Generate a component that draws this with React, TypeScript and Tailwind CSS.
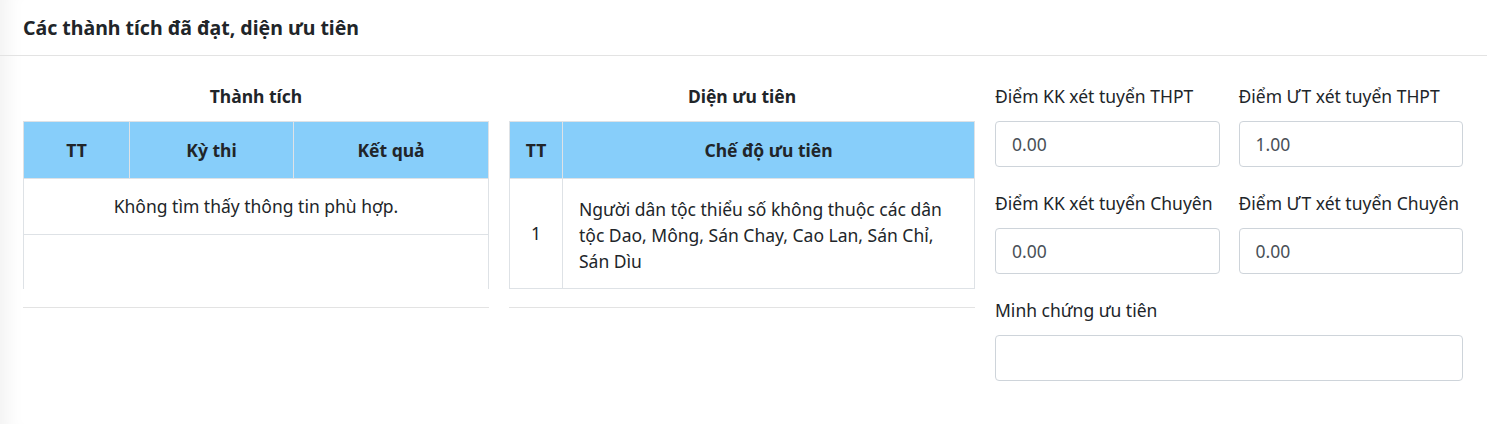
import React from "react";

const font = { fontFamily: "'Noto Sans', 'Open Sans', sans-serif" };

const Field = ({ label, value }: { label: string; value: string }) => (
  <div className="mb-6">
    <label className="block h-6 leading-6 mb-[13px] text-[17.5px] text-[#212529] whitespace-nowrap">{label}</label>
    <div className="h-[46px] rounded border border-[#ced4da] bg-white px-4 pt-px flex items-center text-[17.5px] text-[#495057]">
      {value}
    </div>
  </div>
);

export default function App() {
  return (
    <div style={font} className="w-[1487px] h-[424px] bg-white text-[#212529] shadow-[inset_22px_0_18px_-14px_rgba(0,0,0,0.05)]">
      <div className="h-[56px] border-b border-[#e3e3e3] px-[23px] flex items-center">
        <h2 className="text-[19.5px] font-bold text-[#212529]">Các thành tích đã đạt, diện ưu tiên</h2>
      </div>

      <div className="px-[23px] pt-[28px] flex gap-5 text-[17.5px]">
        {/* Thành tích */}
        <div className="w-[466px]">
          <div className="h-6 leading-6 mb-[13px] text-center font-bold">Thành tích</div>
          <table className="w-full border-collapse">
            <thead>
              <tr className="bg-[#87cefa] h-[57px]">
                <th className="w-[106px] border border-[#dee2e6] font-bold">TT</th>
                <th className="w-[164px] border border-[#dee2e6] font-bold">Kỳ thi</th>
                <th className="border border-[#dee2e6] font-bold">Kết quả</th>
              </tr>
            </thead>
            <tbody>
              <tr className="h-[56px]">
                <td colSpan={3} className="border border-[#dee2e6] text-center">
                  Không tìm thấy thông tin phù hợp.
                </td>
              </tr>
            </tbody>
          </table>
          <div className="h-[54px] border-x border-[#dee2e6]" />
          <div className="mt-[18px] border-t border-[#e3e3e3]" />
        </div>

        {/* Diện ưu tiên */}
        <div className="w-[466px]">
          <div className="h-6 leading-6 mb-[13px] text-center font-bold">Diện ưu tiên</div>
          <table className="w-full border-collapse">
            <thead>
              <tr className="bg-[#87cefa] h-[57px]">
                <th className="w-[53px] border border-[#dee2e6] font-bold">TT</th>
                <th className="border border-[#dee2e6] font-bold">Chế độ ưu tiên</th>
              </tr>
            </thead>
            <tbody>
              <tr className="h-[109px]">
                <td className="border border-[#dee2e6] text-center">1</td>
                <td className="border border-[#dee2e6] px-4 pt-[17px] pb-[14px] leading-[26px]">
                  Người dân tộc thiểu số không thuộc các dân tộc Dao, Mông, Sán Chay, Cao Lan, Sán Chỉ, Sán Dìu
                </td>
              </tr>
            </tbody>
          </table>
          <div className="mt-[18px] border-t border-[#e3e3e3]" />
        </div>

        {/* Điểm */}
        <div className="w-[468px]">
          <div className="grid grid-cols-2 gap-x-[19px]">
            <Field label="Điểm KK xét tuyển THPT" value="0.00" />
            <Field label="Điểm ƯT xét tuyển THPT" value="1.00" />
            <Field label="Điểm KK xét tuyển Chuyên" value="0.00" />
            <Field label="Điểm ƯT xét tuyển Chuyên" value="0.00" />
          </div>
          <Field label="Minh chứng ưu tiên" value="" />
        </div>
      </div>
    </div>
  );
}
